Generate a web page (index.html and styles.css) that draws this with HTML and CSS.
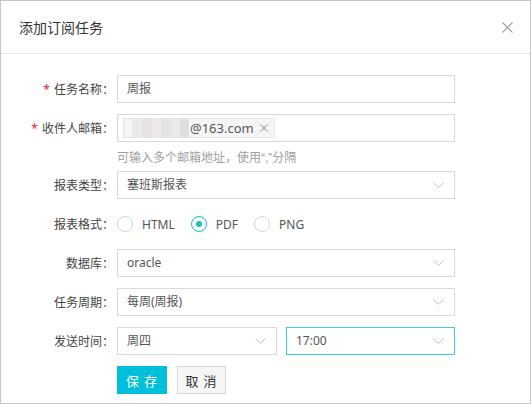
FILE: index.html
```html
<!DOCTYPE html>
<html lang="zh-CN">
<head>
<meta charset="utf-8">
<title>添加订阅任务</title>
<link rel="stylesheet" href="styles.css">
</head>
<body>
<div class="dialog">
  <div class="dialog-header">
    <span class="dialog-title">添加订阅任务</span>
    <span class="close" aria-label="关闭">
      <svg width="11" height="11" viewBox="0 0 11 11"><path d="M0.5 0.5 L10.5 10.5 M10.5 0.5 L0.5 10.5" stroke="#9a9a9a" stroke-width="1.1" fill="none"/></svg>
    </span>
  </div>
  <form class="form">
    <div class="row">
      <label class="label"><span class="req">*</span>任务名称：</label>
      <div class="control">
        <div class="input">周报</div>
      </div>
    </div>
    <div class="row row-hint">
      <label class="label"><span class="req">*</span>收件人邮箱：</label>
      <div class="control">
        <div class="input input-tags">
          <span class="tag"><span class="blur"></span><span class="tag-text">@163.com</span><svg class="tag-x" width="8" height="8" viewBox="0 0 8 8"><path d="M0.5 0.5 L7.5 7.5 M7.5 0.5 L0.5 7.5" stroke="#8c8c8c" stroke-width="1" fill="none"/></svg></span>
        </div>
        <div class="hint">可输入多个邮箱地址，使用<span class="q">“,”</span>分隔</div>
      </div>
    </div>
    <div class="row">
      <label class="label">报表类型：</label>
      <div class="control">
        <div class="input select">塞班斯报表<svg class="arrow" width="11" height="6" viewBox="0 0 11 6"><path d="M0.5 0.5 L5.5 5.5 L10.5 0.5" stroke="#c6c6c6" stroke-width="1" fill="none"/></svg></div>
      </div>
    </div>
    <div class="row">
      <label class="label">报表格式：</label>
      <div class="control radios">
        <span class="radio"><span class="circle"></span>HTML</span>
        <span class="radio checked"><span class="circle"></span>PDF</span>
        <span class="radio"><span class="circle"></span>PNG</span>
      </div>
    </div>
    <div class="row">
      <label class="label">数据库：</label>
      <div class="control">
        <div class="input select">oracle<svg class="arrow" width="11" height="6" viewBox="0 0 11 6"><path d="M0.5 0.5 L5.5 5.5 L10.5 0.5" stroke="#c6c6c6" stroke-width="1" fill="none"/></svg></div>
      </div>
    </div>
    <div class="row">
      <label class="label">任务周期：</label>
      <div class="control">
        <div class="input select">每周(周报)<svg class="arrow" width="11" height="6" viewBox="0 0 11 6"><path d="M0.5 0.5 L5.5 5.5 L10.5 0.5" stroke="#c6c6c6" stroke-width="1" fill="none"/></svg></div>
      </div>
    </div>
    <div class="row">
      <label class="label">发送时间：</label>
      <div class="control pair">
        <div class="input select day">周四<svg class="arrow" width="11" height="6" viewBox="0 0 11 6"><path d="M0.5 0.5 L5.5 5.5 L10.5 0.5" stroke="#c6c6c6" stroke-width="1" fill="none"/></svg></div>
        <div class="input select time focused">17:00<svg class="arrow" width="11" height="6" viewBox="0 0 11 6"><path d="M0.5 0.5 L5.5 5.5 L10.5 0.5" stroke="#c6c6c6" stroke-width="1" fill="none"/></svg></div>
      </div>
    </div>
    <div class="row">
      <div class="label"></div>
      <div class="control buttons">
        <button type="button" class="btn btn-primary">保 存</button>
        <button type="button" class="btn btn-default">取 消</button>
      </div>
    </div>
  </form>
</div>
</body>
</html>
```
FILE: styles.css
```css
html, body {
  margin: 0;
  padding: 0;
  background: #ffffff;
}
body {
  font-family: "Noto Sans", "Noto Sans CJK SC", sans-serif;
  font-size: 12px;
  color: #555;
}
.dialog {
  width: 531px;
  height: 404px;
  box-sizing: border-box;
  border: 1px solid #c6c6c6;
  background: #fff;
  overflow: hidden;
}
.dialog-header {
  height: 52px;
  border-bottom: 1px solid #e5e5e5;
  display: flex;
  align-items: center;
  justify-content: space-between;
  padding: 0 18px 0 18px;
}
.dialog-title {
  font-size: 14px;
  color: #333;
  font-family: "Noto Sans CJK SC", sans-serif;
}
.close {
  display: flex;
  width: 11px;
  height: 11px;
  margin-right: -1px;
}
.form {
  margin: 0;
  padding-top: 21px;
}
.row {
  display: flex;
  align-items: flex-start;
  margin-bottom: 11px;
}
.row-hint {
  margin-bottom: 4px;
}
.label {
  width: 113px;
  height: 28px;
  padding-right: 3px;
  text-align: right;
  line-height: 28px;
  color: #444;
  font-family: "Noto Sans CJK SC", sans-serif;
  font-size: 12px;
  white-space: nowrap;
  overflow: hidden;
}
.req {
  color: #e3242b;
  margin-right: 4px;
  font-family: "Noto Sans", sans-serif;
  line-height: 1;
}
.control {
  width: 338px;
}
.input {
  position: relative;
  height: 28px;
  box-sizing: border-box;
  border: 1px solid #d9d9d9;
  padding: 0 9px;
  line-height: 26px;
  color: #555;
  font-size: 12px;
  overflow: hidden;
}
.input-tags {
  display: flex;
  align-items: center;
  padding: 0 5px;
}
.tag {
  display: flex;
  align-items: center;
  height: 20px;
  box-sizing: border-box;
  border: 1px solid #e6e6e6;
  background: #f5f5f5;
  padding: 0 6px 0 8px;
  line-height: 18px;
}
.blur {
  width: 57px;
  height: 18px;
  background:
    linear-gradient(90deg, #e9e9e9 0 10px, #e6dfe0 10px 20px, #e8e8e8 20px 30px, #e2e2e2 30px 40px, #e9e9e9 40px 48px, #dcdcdc 48px 57px);
  opacity: 0.9;
}
.tag-text {
  font-size: 13px;
  color: #555;
  margin-left: 1px;
}
.tag-x {
  margin-left: 6px;
  display: block;
}
.hint {
  margin-top: 5px;
  height: 20px;
  line-height: 20px;
  color: #a0a0a0;
  font-family: "Noto Sans CJK SC", sans-serif;
  font-size: 12px;
  overflow: hidden;
}
.q {
  font-family: "Liberation Sans", sans-serif;
}
.select .arrow {
  position: absolute;
  right: 10px;
  top: 10px;
  display: block;
}
.radios {
  display: flex;
  align-items: center;
  height: 28px;
}
.radio {
  display: flex;
  align-items: center;
  margin-right: 16px;
  color: #555;
  font-size: 12px;
}
.circle {
  width: 16px;
  height: 16px;
  box-sizing: border-box;
  border: 1px solid #d6d6d6;
  border-radius: 50%;
  margin-right: 9px;
  display: flex;
  align-items: center;
  justify-content: center;
}
.radio.checked .circle {
  border: 1.5px solid #1bb9d8;
}
.radio.checked .circle::after {
  content: "";
  width: 6px;
  height: 6px;
  border-radius: 50%;
  background: #1bb9d8;
}
.pair {
  display: flex;
  gap: 9px;
}
.day {
  width: 160px;
}
.time {
  width: 169px;
}
.focused {
  border-color: #3ccbe0;
}
.buttons {
  display: flex;
  gap: 10px;
}
.btn {
  height: 28px;
  box-sizing: border-box;
  font-family: "Noto Sans CJK SC", sans-serif;
  font-size: 13px;
  padding: 0;
  cursor: pointer;
  letter-spacing: 1px;
}
.btn-primary {
  width: 50px;
  background: #00bfdb;
  border: 1px solid #00bfdb;
  color: #fff;
}
.btn-default {
  width: 49px;
  background: #f6f6f6;
  border: 1px solid #dadada;
  color: #333;
}
```
